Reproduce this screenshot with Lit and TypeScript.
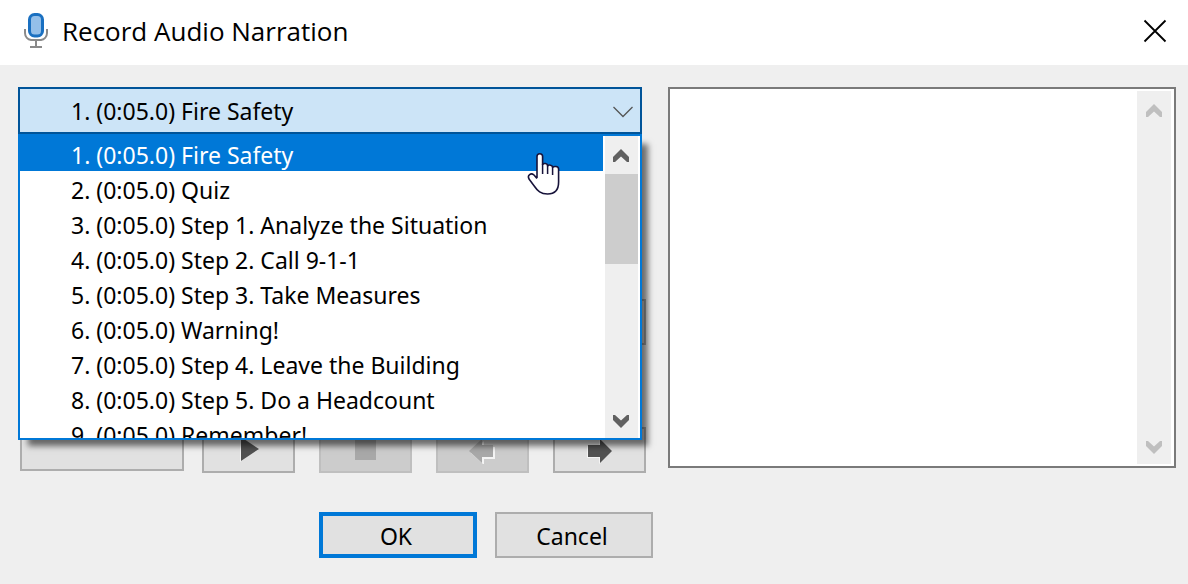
import { LitElement, html, svg, css } from "lit";
import { customElement, property, state } from "lit/decorators.js";
import { classMap } from "lit/directives/class-map.js";

const SLIDES = [
  "1. (0:05.0) Fire Safety",
  "2. (0:05.0) Quiz",
  "3. (0:05.0) Step 1. Analyze the Situation",
  "4. (0:05.0) Step 2. Call 9-1-1",
  "5. (0:05.0) Step 3. Take Measures",
  "6. (0:05.0) Warning!",
  "7. (0:05.0) Step 4. Leave the Building",
  "8. (0:05.0) Step 5. Do a Headcount",
  "9. (0:05.0) Remember!",
];

const microphone = html`<svg width="24" height="36" viewBox="0 0 24 36" aria-hidden="true">
  <path d="M1 16v4c0 4 3 6.500 6 7h10c3-.5 6-3 6-7v-4" fill="none" stroke="#8a8a8a" stroke-width="2" />
  <path d="M12 27v7M6 34h12" fill="none" stroke="#8a8a8a" stroke-width="2" />
  <rect x="5.500" y="1.500" width="13" height="21.500" rx="5" fill="#94bfe9" stroke="#1a70c1" stroke-width="3" />
</svg>`;

const cross = html`<svg width="24" height="24" viewBox="0 0 24 24" aria-hidden="true">
  <path d="M1.500 1.500l21 21M22.500 1.500l-21 21" fill="none" stroke="#000" stroke-width="1.800" />
</svg>`;

const chevron = html`<svg width="20" height="12" viewBox="0 0 20 12" aria-hidden="true">
  <path d="M.5 1l9.500 9.500L19.500 1" fill="none" stroke="#555" stroke-width="1.300" />
</svg>`;

const hand = html`<svg width="34" height="44" viewBox="0 0 34 44" aria-hidden="true">
  <path
    d="M10 26V4.500a2.800 2.800 0 0 1 5.600 0V12.500c1-1.500 5-1.500 5 1.500c1-1.500 5-1.200 5 1.500c1-1.500 6-1.500 6 1.500V30c0 8-4 12-11 12-7 0-10-3-13-7.500L2 27C0 23 4 20.500 7 23l3 3.500"
    fill="#fff" stroke="#17133a" stroke-width="1.600" stroke-linejoin="round" />
  <path d="M15.600 12v10M20.600 14v8M25.600 15.500v7.500" fill="none" stroke="#17133a" stroke-width="1.500" />
</svg>`;

const ARROW = {
  up: "M8 0L16 8V13H14L8 7.500L2 13H0V8Z",
  down: "M8 13L16 5V0H14L8 5.500L2 0H0V5Z",
};

const GLYPHS = {
  play: { d: "M6 1L24 13L6 25Z", cls: "dark", shine: "translate(-1 1)" },
  stop: { d: "M3 3H24V24H3Z", cls: "pale", shine: "" },
  previous: { d: "M0 15L13 3V9H24V21H13V27Z", cls: "pale", shine: "translate(2 2)" },
  next: { d: "M2 9H14V3L26 15L14 27V21H2Z", cls: "dark", shine: "translate(-1 1)" },
};

@customElement("scroll-rail")
export class ScrollRail extends LitElement {
  @property({ type: Boolean }) thumb = false;

  static styles = css`
    :host {
      display: flex;
      flex-direction: column;
      justify-content: space-between;
      background: #efefef;
      color: #606060;
    }
    :host([inactive]) {
      color: #bfbfbf;
    }
    .step {
      display: flex;
      align-items: center;
      justify-content: center;
      height: 38px;
      padding: 0 1px 0 0;
      border: 0;
      background: none;
      color: inherit;
    }
    .step.down {
      height: 34px;
    }
    .thumb {
      height: 90px;
      margin-bottom: auto;
      background: #cdcdcd;
    }
    path {
      fill: currentColor;
    }
  `;

  private step(dir: "up" | "down") {
    return html`<button class="step ${dir}" aria-label="Scroll ${dir}">
      <svg width="16" height="13" viewBox="0 0 16 13">${svg`<path d=${ARROW[dir]} />`}</svg>
    </button>`;
  }

  render() {
    return html`${this.step("up")}${this.thumb ? html`<div class="thumb"></div>` : ""}${this.step("down")}`;
  }
}

@customElement("app-root")
export class AppRoot extends LitElement {
  @state() private selected = 0;

  static styles = css`
    :host {
      display: flex;
      flex-direction: column;
      box-sizing: border-box;
      min-height: 100vh;
      border-bottom: 1px solid #f8f8f8;
      background: #efefef;
      color: #000;
      font: 23px/32px "Noto Sans", "Open Sans", sans-serif;
    }
    * {
      box-sizing: border-box;
    }
    svg {
      display: block;
    }
    button,
    select,
    textarea {
      margin: 0;
      font: inherit;
      color: inherit;
      border-radius: 0;
      outline: none;
    }
    .titlebar {
      display: flex;
      align-items: center;
      gap: 14px;
      height: 65px;
      padding: 0 18px 4px 24px;
      background: #fff;
    }
    .title {
      flex: 1;
      margin: 0;
      font-family: "Open Sans", sans-serif;
      font-size: 26px;
      font-weight: 400;
    }
    .close {
      padding: 3px;
      border: 0;
      background: none;
    }
    .content {
      display: grid;
      grid-template-columns: 628fr 508fr;
      gap: 22px;
      align-items: start;
      padding: 22px 12px 0 18px;
    }
    .recorder {
      display: flex;
      flex-direction: column;
    }
    .combo {
      position: relative;
      margin-right: 4px;
    }
    .current {
      display: block;
      width: 100%;
      height: 47px;
      padding: 0 51px;
      border: 2px solid #005499;
      background: #cce4f7;
      appearance: none;
    }
    .chevron {
      position: absolute;
      right: 9px;
      top: 19px;
      pointer-events: none;
    }
    .popup {
      position: absolute;
      z-index: 1;
      top: 100%;
      left: 0;
      right: 0;
      display: flex;
      gap: 2px;
      height: 306px;
      padding-right: 2px;
      border: 2px solid #0078d7;
      background: #fff;
      box-shadow: 8px 8px 6px -2px rgba(0, 0, 0, 0.55);
    }
    .slides {
      flex: 1;
      margin: 0;
      padding: 0;
      overflow: hidden;
      list-style: none;
    }
    .slide {
      height: 35px;
      padding: 3px 0 0 51px;
      white-space: nowrap;
    }
    .slide.active {
      background: #0078d7;
      color: #fff;
    }
    .rail {
      width: 33px;
    }
    .pointer {
      position: absolute;
      top: 16px;
      right: 79px;
      pointer-events: none;
    }
    .button {
      display: flex;
      align-items: center;
      justify-content: center;
      height: 46px;
      padding: 0;
      border: 2px solid #adadad;
      background: #e1e1e1;
    }
    .button:disabled {
      border-color: #bfbfbf;
      background: #cccccc;
    }
    .settings {
      align-self: flex-end;
      width: 164px;
      margin-top: 165px;
    }
    .controls {
      display: grid;
      grid-template-columns: 164fr 444fr;
      gap: 18px;
      margin: 82px 0 0 2px;
    }
    .record {
      height: 44px;
    }
    .transport {
      display: grid;
      grid-template-columns: repeat(4, 1fr);
      gap: 24px;
    }
    .shine {
      fill: #f4f4f4;
    }
    .dark {
      fill: #525252;
    }
    .pale {
      fill: #a8a8a8;
    }
    .notes {
      display: flex;
      height: 381px;
      padding: 2px 3px 2px 2px;
      border: 2px solid #7a7a7a;
      background: #fff;
    }
    .text {
      flex: 1;
      min-width: 0;
      border: 0;
      background: none;
      resize: none;
    }
    .notes .rail {
      width: 34px;
    }
    .actions {
      display: flex;
      gap: 18px;
      padding: 39px 12px 26px 319px;
    }
    .action {
      width: 158px;
      padding: 2px 4px 0 0;
    }
    .primary {
      border: 4px solid #0078d7;
    }
  `;

  private tool(name: keyof typeof GLYPHS, disabled = false) {
    const { d, cls, shine } = GLYPHS[name];
    return html`<button class="button" aria-label=${name} ?disabled=${disabled}>
      <svg width="28" height="28" viewBox="0 0 28 28">
        ${svg`<path class="shine" d=${d} transform=${shine} /><path class=${cls} d=${d} />`}
      </svg>
    </button>`;
  }

  private choose(e: Event) {
    this.selected = (e.target as HTMLSelectElement).selectedIndex;
  }

  render() {
    return html`
      <header class="titlebar">
        ${microphone}
        <h1 class="title">Record Audio Narration</h1>
        <button class="close" aria-label="Close">${cross}</button>
      </header>
      <main class="content">
        <section class="recorder">
          <div class="combo">
            <select class="current" aria-label="Slide" @change=${this.choose}>
              ${SLIDES.map((s, i) => html`<option ?selected=${i === this.selected}>${s}</option>`)}
            </select>
            <span class="chevron">${chevron}</span>
            <div class="popup">
              <ul class="slides" role="listbox" aria-label="Slides">
                ${SLIDES.map(
                  (s, i) => html`<li
                    role="option"
                    aria-selected=${i === this.selected}
                    class=${classMap({ slide: true, active: i === this.selected })}
                    @click=${() => (this.selected = i)}
                  >${s}</li>`
                )}
              </ul>
              <scroll-rail class="rail" thumb></scroll-rail>
              <span class="pointer">${hand}</span>
            </div>
          </div>
          <button class="button settings" aria-label="Settings"></button>
          <div class="controls">
            <button class="button record" aria-label="Start recording"></button>
            <div class="transport">
              ${this.tool("play")}${this.tool("stop", true)}${this.tool("previous", true)}${this.tool("next")}
            </div>
          </div>
        </section>
        <div class="notes">
          <textarea class="text" aria-label="Slide notes"></textarea>
          <scroll-rail class="rail" inactive></scroll-rail>
        </div>
      </main>
      <footer class="actions">
        <button class="button action primary">OK</button>
        <button class="button action">Cancel</button>
      </footer>
    `;
  }
}
